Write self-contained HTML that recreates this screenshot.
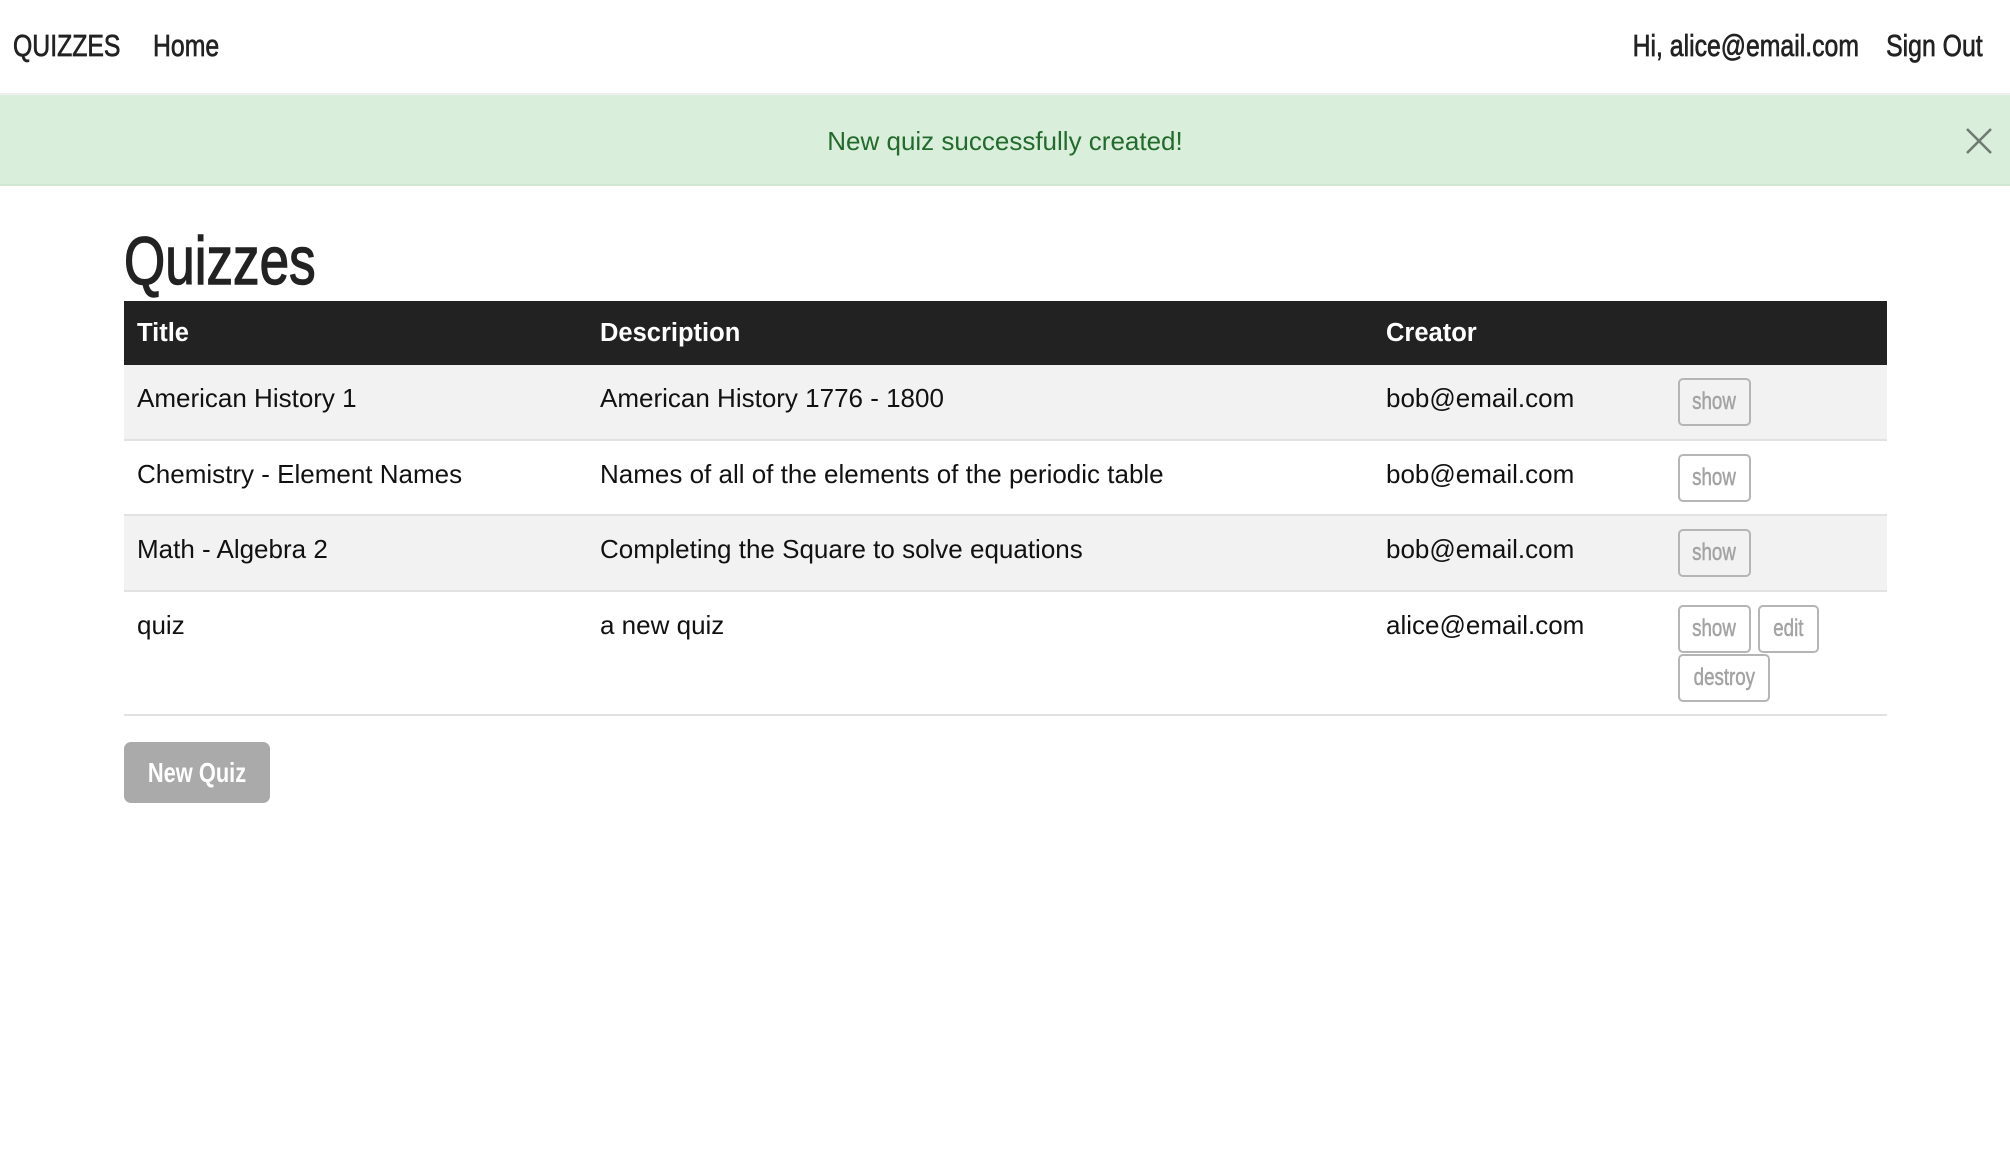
<!DOCTYPE html>
<html><head><meta charset="utf-8"><style>
*{margin:0;padding:0;box-sizing:border-box}
body{width:2010px;height:1156px;background:#fff;font-family:"Liberation Sans",sans-serif;color:#111;position:relative;overflow:hidden}
.n{display:inline-block;transform:scaleX(.8);transform-origin:left center;white-space:nowrap}
.nr{display:inline-block;transform:scaleX(.8);transform-origin:right center;white-space:nowrap}
.nc{display:inline-block;transform:scaleX(.78);transform-origin:center center;white-space:nowrap}
.nav{position:absolute;left:0;top:0;width:2010px;height:95px;border-bottom:2px solid #eee}
.nav>span{position:absolute;top:28px;font-size:31px;color:#222;-webkit-text-stroke:.7px #222}
.alert{position:absolute;left:0;top:95px;width:2010px;height:91px;background:#d9eedb;border-bottom:2px solid #cfe6d1}
.alert .t{position:absolute;left:0;width:2010px;text-align:center;top:31px;font-size:26px;color:#236b2c}
h1{position:absolute;left:124px;top:222px;font-size:68px;font-weight:normal;color:#222;-webkit-text-stroke:1.4px #222}
.tbl{position:absolute;left:124px;top:301px;width:1763px}
.hd{height:64px;background:#222;position:relative;color:#fff;font-weight:bold;font-size:25.5px}
.row{position:relative;border-bottom:2px solid #e2e2e2;font-size:26px;color:#111}
.c{position:absolute;top:18px;white-space:nowrap}
.hd .c{top:18px}
.b{position:absolute;border:2px solid #b5b5b5;border-radius:5px;color:#a3a3a3;font-size:24px;text-align:center;line-height:44px;height:48px;-webkit-text-stroke:.5px #a3a3a3}
.nq{position:absolute;left:124px;top:742px;width:146px;height:61px;background:#aaa;border-radius:7px;color:#fff;font-size:28px;font-weight:bold;text-align:center;line-height:61px}
</style></head><body>
<div class="nav">
<span style="left:13px"><span class="n">QUIZZES</span></span>
<span style="left:153px"><span class="n">Home</span></span>
<span style="right:151px"><span class="nr">Hi, alice@email.com</span></span>
<span style="right:27px"><span class="nr">Sign Out</span></span>
</div>
<div class="alert"><div class="t">New quiz successfully created!</div>
<svg style="position:absolute;left:1965px;top:32px" width="28" height="28" viewBox="0 0 28 28"><path d="M2 2L26 26M26 2L2 26" stroke="#6f7a70" stroke-width="2.6"/></svg>
</div>
<h1><span class="n" style="transform:scaleX(.78)">Quizzes</span></h1>
<div class="tbl">
<div class="hd"><span class="c" style="left:13px">Title</span><span class="c" style="left:476px">Description</span><span class="c" style="left:1262px">Creator</span></div>
<div class="row" style="height:76px;background:#f2f2f2"><span class="c" style="left:13px">American History 1</span><span class="c" style="left:476px">American History 1776 - 1800</span><span class="c" style="left:1262px">bob@email.com</span><span class="b" style="left:1554px;top:13px;width:73px"><span class="nc">show</span></span></div>
<div class="row" style="height:75px"><span class="c" style="left:13px">Chemistry - Element Names</span><span class="c" style="left:476px">Names of all of the elements of the periodic table</span><span class="c" style="left:1262px">bob@email.com</span><span class="b" style="left:1554px;top:13px;width:73px"><span class="nc">show</span></span></div>
<div class="row" style="height:76px;background:#f2f2f2"><span class="c" style="left:13px">Math - Algebra 2</span><span class="c" style="left:476px">Completing the Square to solve equations</span><span class="c" style="left:1262px">bob@email.com</span><span class="b" style="left:1554px;top:13px;width:73px"><span class="nc">show</span></span></div>
<div class="row" style="height:124px"><span class="c" style="left:13px">quiz</span><span class="c" style="left:476px">a new quiz</span><span class="c" style="left:1262px">alice@email.com</span><span class="b" style="left:1554px;top:13px;width:73px"><span class="nc">show</span></span><span class="b" style="left:1634px;top:13px;width:61px"><span class="nc">edit</span></span><span class="b" style="left:1554px;top:62px;width:92px"><span class="nc">destroy</span></span></div>
</div>
<div class="nq"><span class="nc">New Quiz</span></div>
</body></html>
